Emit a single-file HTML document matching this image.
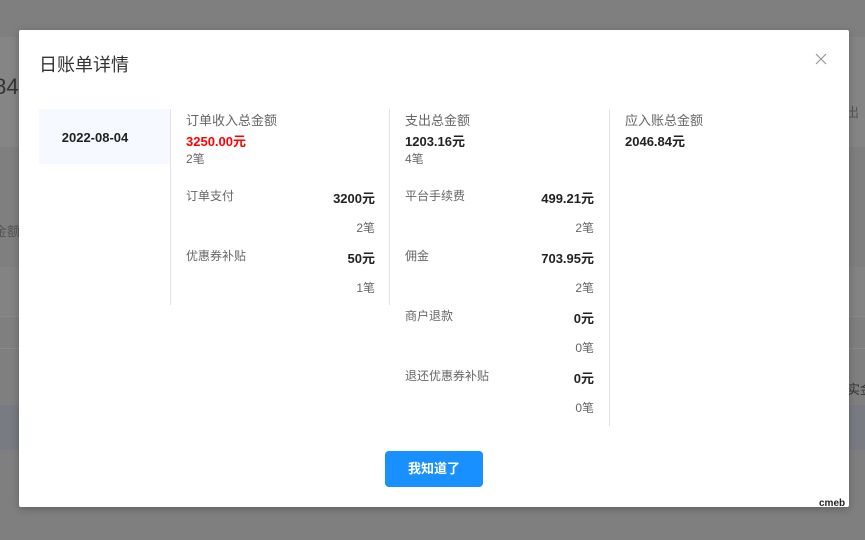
<!DOCTYPE html>
<html><head><meta charset="utf-8"><style>
body{margin:0;width:865px;height:540px;overflow:hidden;background:#7f7f7f;font-family:"Liberation Sans","Noto Sans CJK SC",sans-serif;position:relative}
.a{position:absolute;white-space:nowrap}
.modal{left:19px;top:30px;width:830px;height:477px;background:#fff;border-radius:2px;box-shadow:0 2px 8px rgba(0,0,0,.25)}
.lbl{font-size:13px;color:#666}
.b{font-size:13px;font-weight:bold;color:#222}
.c{font-size:12px;color:#666}
.r{text-align:right}
</style></head><body>
<div class="a" style="left:0;top:37px;width:865px;height:110px;background:#858585"></div>
<div class="a" style="left:0;top:267px;width:865px;height:50px;background:#838383"></div>
<div class="a" style="left:0;top:316px;width:865px;height:1px;background:#8a8a8a"></div>
<div class="a" style="left:0;top:348px;width:865px;height:1px;background:#8a8a8a"></div>
<div class="a" style="left:0;top:405px;width:865px;height:45px;background:#787b82"></div>
<div class="a" style="left:-12px;top:74px;font-size:22px;color:#333">.84</div>
<div class="a" style="left:-6px;top:221px;font-size:13px;color:#555">金额</div>
<div class="a" style="left:846px;top:102px;font-size:13px;color:#555">出</div>
<div class="a" style="left:847px;top:379px;font-size:13px;color:#333">实金</div>
<div class="a modal"></div>
<div class="a" style="left:39px;top:51px;font-size:18px;color:#333">日账单详情</div>
<svg class="a" style="left:815px;top:53px" width="12" height="12"><path d="M1 1L11 11M11 1L1 11" stroke="#999" stroke-width="1.2"/></svg>
<div class="a" style="left:39px;top:109px;width:131px;height:55px;background:#f6f9ff"></div>
<div class="a b" style="left:39px;top:130px;width:112px;text-align:center;font-size:13px">2022-08-04</div>
<div class="a" style="left:170px;top:109px;width:1px;height:196px;background:#e2e2e2"></div>
<div class="a" style="left:389px;top:109px;width:1px;height:196px;background:#e2e2e2"></div>
<div class="a" style="left:609px;top:109px;width:1px;height:317px;background:#e2e2e2"></div>

<div class="a lbl" style="left:186px;top:110px">订单收入总金额</div>
<div class="a b" style="left:186px;top:131px;color:#f00">3250.00元</div>
<div class="a c" style="left:186px;top:150px">2笔</div>
<div class="a lbl" style="left:186px;top:187px;font-size:12px">订单支付</div>
<div class="a b r" style="left:275px;width:100px;top:188px">3200元</div>
<div class="a c r" style="left:275px;width:100px;top:219px">2笔</div>
<div class="a lbl" style="left:186px;top:247px;font-size:12px">优惠券补贴</div>
<div class="a b r" style="left:275px;width:100px;top:248px">50元</div>
<div class="a c r" style="left:275px;width:100px;top:279px">1笔</div>

<div class="a lbl" style="left:405px;top:110px">支出总金额</div>
<div class="a b" style="left:405px;top:131px">1203.16元</div>
<div class="a c" style="left:405px;top:150px">4笔</div>
<div class="a lbl" style="left:405px;top:187px;font-size:12px">平台手续费</div>
<div class="a b r" style="left:494px;width:100px;top:188px">499.21元</div>
<div class="a c r" style="left:494px;width:100px;top:219px">2笔</div>
<div class="a lbl" style="left:405px;top:247px;font-size:12px">佣金</div>
<div class="a b r" style="left:494px;width:100px;top:248px">703.95元</div>
<div class="a c r" style="left:494px;width:100px;top:279px">2笔</div>
<div class="a lbl" style="left:405px;top:307px;font-size:12px">商户退款</div>
<div class="a b r" style="left:494px;width:100px;top:308px">0元</div>
<div class="a c r" style="left:494px;width:100px;top:339px">0笔</div>
<div class="a lbl" style="left:405px;top:367px;font-size:12px">退还优惠券补贴</div>
<div class="a b r" style="left:494px;width:100px;top:368px">0元</div>
<div class="a c r" style="left:494px;width:100px;top:399px">0笔</div>

<div class="a lbl" style="left:625px;top:110px">应入账总金额</div>
<div class="a b" style="left:625px;top:131px">2046.84元</div>

<div class="a" style="left:385px;top:451px;width:98px;height:36px;background:#1890ff;border-radius:4px;color:#fff;font-size:13px;font-weight:bold;text-align:center;line-height:36px">我知道了</div>
<div class="a" style="left:819px;top:498px;font-size:10px;font-weight:bold;color:#222">cmeb</div>
</body></html>
